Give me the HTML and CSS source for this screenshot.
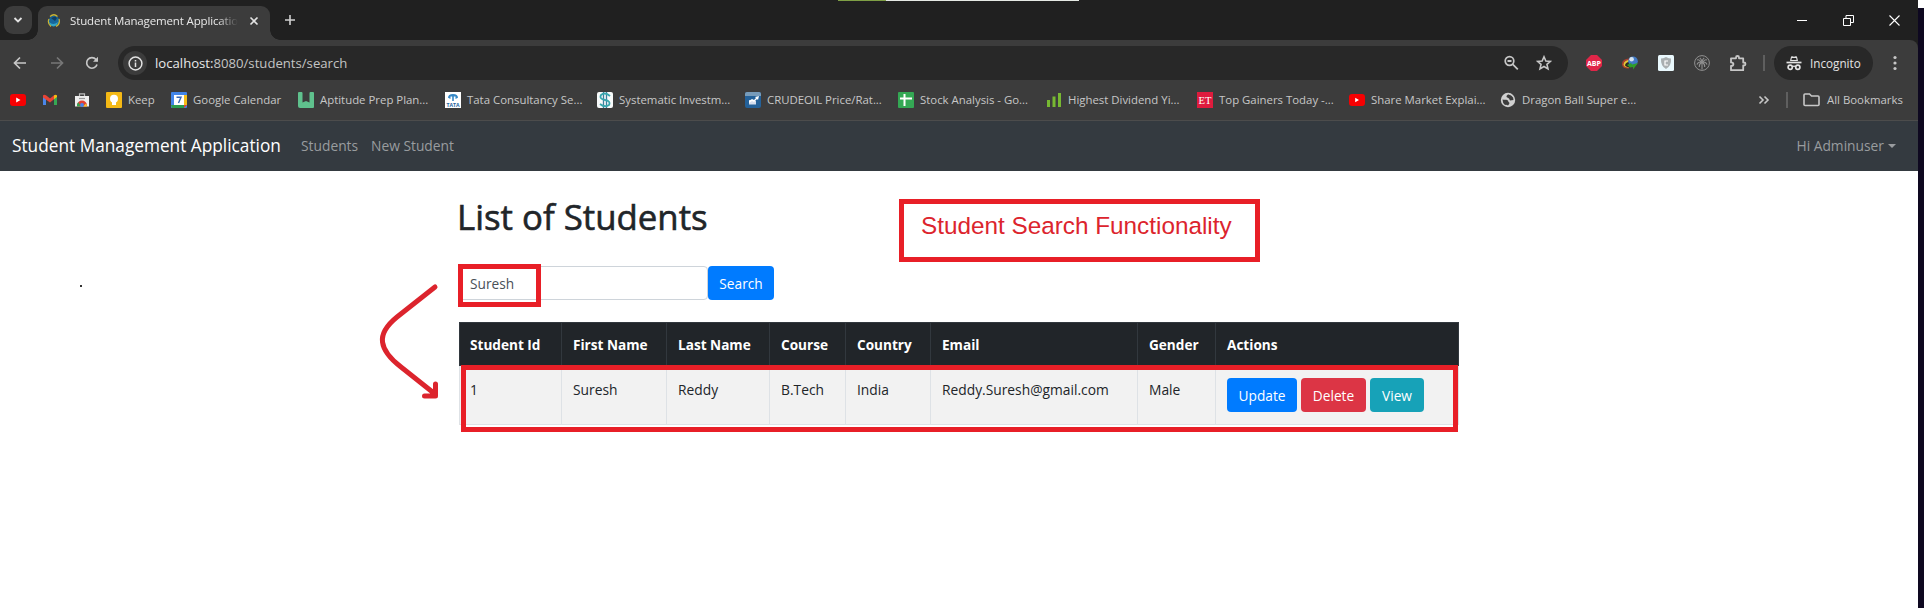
FILE: index.html
```html
<!DOCTYPE html>
<html lang="en">
<head>
<meta charset="utf-8">
<title>Student Management Application</title>
<link rel="stylesheet" href="styles.css">
</head>
<body>
<div class="window">
  <header class="tabstrip">
    <button class="tab-search"><svg width="10" height="8" viewBox="0 0 10 8"><path d="M1.5 2l3.5 3.5L8.500 2" fill="none" stroke="#e3e3e3" stroke-width="1.8"/></svg></button>
    <div class="tab">
      <svg width="14" height="14" viewBox="0 0 14 14"><circle cx="7" cy="7" r="5.300" fill="#16669b"/><path d="M2 8q4 4 9 0q-1 4-4.500 4.500Q3 12 2 8z" fill="#34a5c4"/><path d="M4 4l4 3 2-3-2-1.500z" fill="#133d5d"/><path d="M3 2.500Q7-1 10.500 2.500M12 5q1.500 5-3 7.500M2 5q-2 4 2 7.500" fill="none" stroke="#c9b536" stroke-width="1.200"/></svg>
      <span class="tab-title">Student Management Application</span>
      <svg class="tab-close" width="10" height="10" viewBox="0 0 10 10"><path d="M1.500 1.500l7 7m0-7l-7 7" stroke="#e3e3e3" stroke-width="1.600"/></svg>
    </div>
    <svg class="new-tab" width="12" height="12" viewBox="0 0 12 12"><path d="M6 1v10M1 6h10" stroke="#d0d0d0" stroke-width="1.600"/></svg>
    <div class="window-buttons">
      <svg width="11" height="11" viewBox="0 0 11 11"><path d="M0 5.500h10" stroke="#fff"/></svg>
      <svg width="11" height="11" viewBox="0 0 11 11"><path d="M.5 3.500h7v7h-7zM3 3V.5h7.500v7H8" fill="none" stroke="#fff"/></svg>
      <svg width="11" height="11" viewBox="0 0 11 11"><path d="M.5.5l10 10m0-10l-10 10" stroke="#fff" stroke-width="1.100"/></svg>
    </div>
    <div class="overlay-strip"></div>
  </header>

  <div class="toolbar">
    <svg class="back" width="14" height="14" viewBox="0 0 14 14"><path d="M13 7H2M7 1.500L1.500 7 7 12.500" fill="none" stroke="#c7c7c7" stroke-width="1.700"/></svg>
    <svg class="forward" width="14" height="14" viewBox="0 0 14 14"><path d="M1 7h11M7 1.500L12.500 7 7 12.500" fill="none" stroke="#777" stroke-width="1.700"/></svg>
    <svg class="reload" width="14" height="14" viewBox="0 0 14 14"><path d="M12 8.500A5.300 5.300 0 1 1 11 3.500l1.500 1.500" fill="none" stroke="#c7c7c7" stroke-width="1.700"/><path d="M13 .7v5H8z" fill="#c7c7c7"/></svg>
    <div class="omnibox">
      <span class="site-info"><svg width="15" height="15" viewBox="0 0 15 15"><circle cx="7.500" cy="7.500" r="6.400" fill="none" stroke="#e3e3e3" stroke-width="1.500"/><path d="M7.500 6.600v4.300M7.500 4v1.600" stroke="#e3e3e3" stroke-width="1.500"/></svg></span>
      <span class="url"><b>localhost:</b>8080/students/search</span>
      <svg class="magnify" width="16" height="16" viewBox="0 0 16 16"><circle cx="6.500" cy="6" r="4.300" fill="none" stroke="#c7c7c7" stroke-width="1.700"/><path d="M4.500 6h4M9.800 9.300l5 5" stroke="#c7c7c7" stroke-width="1.800"/></svg>
      <svg class="star" width="16" height="16" viewBox="0 0 16 16"><path d="M8 1.800l1.850 4.200 4.550.4-3.450 3.000 1.050 4.500L8 11.500l-4 2.400 1.050-4.500L1.600 6.400 6.150 6z" fill="none" stroke="#c7c7c7" stroke-width="1.600"/></svg>
    </div>
    <div class="extensions">
      <svg width="16" height="16" viewBox="0 0 16 16"><path d="M5 0h6l5 5v6l-5 5H5l-5-5V5z" fill="#df2648"/><text x="8" y="10.800" text-anchor="middle" class="abp" textLength="14" lengthAdjust="spacingAndGlyphs">ABP</text></svg>
      <svg width="16" height="16" viewBox="0 0 16 16"><path d="M0 10Q-.5 4 7 3.500l3 4Q6 8 7 13.500 1 14 0 10z" fill="#a8402c"/><path d="M1.500 9.500Q2 5 8 5l2 2Q5.500 8 6.500 12.500 2 12.500 1.500 9.500z" fill="#e3c938"/><path d="M3 10Q4 6.500 9 6.500L7 12Q3.500 12 3 10z" fill="#2a2a22"/><circle cx="11" cy="6.200" r="4.800" fill="#4179c4"/><circle cx="9.600" cy="4.200" r="2.300" fill="#d4e4f0"/><path d="M5 10l4-2 1 1.500 6-1.500-5 6.500v-2.500l-3 .5z" fill="#2f9d29"/></svg>
      <svg width="16" height="16" viewBox="0 0 16 16"><rect width="16" height="16" rx="1.500" fill="#e9f8fd"/><path d="M8 2q3 1.500 5 1.500Q13.500 11 8 14 2.500 11 3 3.500 5 3.500 8 2z" fill="#a9afb1"/><path d="M10 6H7v4h3" fill="none" stroke="#fff" stroke-width="1.200"/></svg>
      <svg width="16" height="16" viewBox="0 0 16 16"><circle cx="8" cy="8" r="7.400" fill="none" stroke="#909090"/><path d="M8 6.500v8M7 7Q5.500 4 3 5M9 7q1.500-3 4-2M7.500 7Q4 6.500 3 9.500M8.500 7Q12 6.500 13 9.500M7.500 7.500Q5 9 5.300 12M8.500 7.500q2.500 1.500 2.200 4.500M8 7Q7.500 4 5.800 3M8 7q.5-3 2.200-4" fill="none" stroke="#909090" stroke-width="1.100"/></svg>
      <svg width="18" height="18" viewBox="0 0 18 18"><path d="M2 4.300H7V3.500a1.500 1.500 0 0 1 3 0v.8h4.200v4.200h.8a1.500 1.500 0 0 1 0 3h-.8v4.700H2v-4.200q2.400-.2 2.400-1.800T2 8.400z" fill="none" stroke="#c7c7c7" stroke-width="1.800" stroke-linejoin="round"/></svg>
    </div>
    <span class="divider"></span>
    <div class="incognito"><svg width="16" height="16" viewBox="0 0 16 16"><path d="M4 6l1-4.200Q5.300 1 6.200 1.300L8 1.800l1.800-.5q.9-.3 1.200.5L12 6z" fill="#e3e3e3"/><path d="M5.800 2.900h4.400l.4 2H5.400z" fill="#292929"/><path d="M.5 7.500h15" stroke="#e3e3e3" stroke-width="1.700"/><circle cx="4.200" cy="12.200" r="2.100" fill="none" stroke="#e3e3e3" stroke-width="1.700"/><circle cx="11.800" cy="12.200" r="2.100" fill="none" stroke="#e3e3e3" stroke-width="1.700"/><path d="M6 11.800q2-1.200 4 0" fill="none" stroke="#e3e3e3" stroke-width="1.300"/></svg><span>Incognito</span></div>
    <svg class="kebab" width="4" height="16" viewBox="0 0 4 16"><g fill="#c7c7c7"><circle cx="2" cy="2.500" r="1.600"/><circle cx="2" cy="8" r="1.600"/><circle cx="2" cy="13.500" r="1.600"/></g></svg>
  </div>

  <nav class="bookmarks">
    <a><svg width="16" height="16" viewBox="0 0 16 16"><rect y="2" width="16" height="12" rx="3" fill="#f60002"/><path d="M6.200 5.500v5L10.500 8z" fill="#fff"/></svg></a>
    <a><svg width="16" height="16" viewBox="0 0 16 16"><path d="M1 4.500v8.500h3V6z" fill="#4a86e8"/><path d="M15 4.500v8.500h-3V6z" fill="#36a853"/><path d="M1 3.500q1-1.500 3-.2L8 6.500l4-3.200v4L8 10.500 1 5.500z" fill="#e84435"/><path d="M12 3.300q2-1.300 3 .2V5l-3 2.300z" fill="#f6bb11"/></svg></a>
    <a><svg width="16" height="16" viewBox="0 0 16 16"><path d="M5.500 4V1.800h5V4" fill="none" stroke="#bbb" stroke-width="1.200"/><path d="M1 4h14v10.500H1z" fill="#eee"/><path d="M3 14.500v-1a5 5 0 0 1 10 0v1z" fill="#e34133"/><path d="M3 14.500a5 5 0 0 1 1.200-4.200L7 14.500z" fill="#31a352"/><path d="M13 14.500a5 5 0 0 0-1-3L9 14.500z" fill="#f7c32b"/><circle cx="8" cy="13" r="1.900" fill="#4485ed"/><path d="M5 6.500h6" stroke="#999" stroke-width="1.200"/></svg></a>
    <a><svg width="16" height="16" viewBox="0 0 16 16"><rect width="16" height="16" rx="1" fill="#f4b915"/><circle cx="8" cy="6.800" r="4" fill="#fff"/><path d="M6 10h4v3H6z" fill="#fff"/></svg><span>Keep</span></a>
    <a><svg width="16" height="16" viewBox="0 0 16 16"><rect width="16" height="16" rx="1" fill="#4285e8"/><path d="M13 3h3v10h-3z" fill="#f6bd19"/><path d="M0 13h13v3H1z" fill="#2a9d4f"/><path d="M13 13h3l-3 3z" fill="#e34134"/><path d="M3 3h10v10H3z" fill="#fff"/><path d="M5.500 5.200h4.500L7.500 11" fill="none" stroke="#3466b5" stroke-width="1.400"/></svg><span>Google Calendar</span></a>
    <a><svg width="16" height="16" viewBox="0 0 16 16"><path d="M0 1q0-1 1-1h2.500q1 0 1 1v9.500l3.500-1.500 3.500 1.500V1q0-1 1-1H15q1 0 1 1v14q0 1-1 1H2q-2 0-2-2z" fill="#5fc18d"/></svg><span>Aptitude Prep Plan...</span></a>
    <a><svg width="16" height="16" viewBox="0 0 16 16"><path d="M0 0h16v16H0z" fill="#fff"/><path d="M3 5.800Q3 2 8 2t5 3.800L10.500 7V4.500h-1.700V9H7.200V4.500H5.500V7z" fill="#3587c5"/><text x="8" y="14.600" text-anchor="middle" class="tata" textLength="13" lengthAdjust="spacingAndGlyphs">TATA</text></svg><span>Tata Consultancy Se...</span></a>
    <a><svg width="16" height="16" viewBox="0 0 16 16"><rect width="16" height="16" rx="2" fill="#f7fafa"/><path d="M6.500 0v16M9.500 0v16" stroke="#3e7e9d" stroke-width="1.300"/><path d="M13 4Q8-.5 4 3q-2 4 4 5t4 5q-4 3-9-1" fill="none" stroke="#38a6ad" stroke-width="1.800"/></svg><span>Systematic Investm...</span></a>
    <a><svg width="16" height="16" viewBox="0 0 16 16"><rect width="16" height="16" rx="2" fill="#246199"/><path d="M0 2q0-2 2-2h12q2 0 2 2v2H0z" fill="#779bb9"/><path d="M4 8v4.500h7V9" fill="#d5dfef"/><path d="M4 9l3-2 2 1 2-2-1-1 4-1-1 4-1-1-3 3-2-1-3 2z" fill="#fff"/></svg><span>CRUDEOIL Price/Rat...</span></a>
    <a><svg width="16" height="16" viewBox="0 0 16 16"><rect width="16" height="16" rx="1" fill="#34a854"/><path d="M6.500 2v12M2 6.500h12" stroke="#fff" stroke-width="2"/></svg><span>Stock Analysis - Go...</span></a>
    <a><svg width="16" height="16" viewBox="0 0 16 16"><path d="M1 8h3v7H1zM6.500 4.500h3V15h-3zM12 1h3v14h-3z" fill="#77b832"/></svg><span>Highest Dividend Yi...</span></a>
    <a><svg width="16" height="16" viewBox="0 0 16 16"><path d="M0 0h16v16H0z" fill="#df1b3d"/><text x="8" y="12" text-anchor="middle" class="et" textLength="13" lengthAdjust="spacingAndGlyphs">ET</text></svg><span>Top Gainers Today -...</span></a>
    <a><svg width="16" height="16" viewBox="0 0 16 16"><rect y="2" width="16" height="12" rx="3" fill="#f60002"/><path d="M6.200 5.800v4.400L10 8z" fill="#fff"/></svg><span>Share Market Explai...</span></a>
    <a><svg width="16" height="16" viewBox="0 0 16 16"><circle cx="8" cy="8" r="7.200" fill="#d0d0d0"/><path d="M8 2.500q-1 2 1.500 2.500l1.500 1.500q2 .5 2.500-.5M2.500 7.500q2 .5 4 .2 2 .3 2 2.300 2 1-.5 3.500-1.500-1-3-.5Q2.500 11 2.500 7.500z" fill="#3c3c3c"/><path d="M8 2.500q-2 1-1.500 2.500L9 6.500l1 2 3.500-.5Q13 4 10 3z" fill="#3c3c3c"/></svg><span>Dragon Ball Super e...</span></a>
    <svg class="more" width="12" height="10" viewBox="0 0 12 10"><path d="M1.500 1.500L5 5 1.500 8.500M6.500 1.500L10 5 6.500 8.500" fill="none" stroke="#c7c7c7" stroke-width="1.600"/></svg>
    <i class="divider"></i>
    <a class="all"><svg width="17" height="14" viewBox="0 0 17 14"><path d="M1 2q0-1 1-1h4.500l2 2H15q1 0 1 1v7.500q0 1-1 1H2q-1 0-1-1z" fill="none" stroke="#c7c7c7" stroke-width="1.600"/></svg><span>All Bookmarks</span></a>
  </nav>

  <div class="navbar">
    <a class="brand">Student Management Application</a>
    <a class="nav-students">Students</a>
    <a class="nav-new">New Student</a>
    <a class="user">Hi Adminuser</a>
  </div>

  <main class="page">
    <div class="container">
      <h1>List of Students</h1>
      <form class="search"><input value="Suresh"><button type="button" class="btn primary">Search</button></form>
      <table>
        <colgroup><col class="c1"><col class="c2"><col class="c3"><col class="c4"><col class="c5"><col class="c6"><col class="c7"><col class="c8"></colgroup>
        <thead><tr><th>Student Id</th><th>First Name</th><th>Last Name</th><th>Course</th><th>Country</th><th>Email</th><th>Gender</th><th>Actions</th></tr></thead>
        <tbody><tr><td>1</td><td>Suresh</td><td>Reddy</td><td>B.Tech</td><td>India</td><td>Reddy.Suresh@gmail.com</td><td>Male</td><td><div class="actions"><a class="btn primary update">Update</a><a class="btn danger">Delete</a><a class="btn info">View</a></div></td></tr></tbody>
      </table>
    </div>
    <div class="note"><span>Student Search Functionality</span></div>
    <div class="mark mark-input"></div>
    <div class="mark mark-row"></div>
    <svg class="arrow" width="70" height="120" viewBox="0 0 70 120"><path d="M60 7L22 37Q6 50 7.500 62T26 87L60 114M60.500 104v12H49.500" fill="none" stroke="#dc242d" stroke-width="5" stroke-linecap="round" stroke-linejoin="round"/></svg>
    <span class="dot"></span>
  </main>
</div>
<aside class="desktop"></aside>
</body>
</html>
```
FILE: styles.css
```css
* { box-sizing: border-box; }
body { margin: 0; width: 1924px; height: 608px; overflow: hidden; display: flex; background: #fff; font-family: "Open Sans", "Noto Sans", sans-serif; }
svg { display: block; flex: none; }
a, span { white-space: nowrap; }
.window { width: 1918px; height: 608px; display: flex; flex-direction: column; background: #1f1f1f; }
.desktop { width: 6px; height: 600px; margin-top: 8px; background: #0e0820; }

.tabstrip { position: relative; height: 40px; background: #202020; display: flex; align-items: center; padding-left: 4px; }
.tab-search { width: 28px; height: 28px; border: 0; border-radius: 9px; background: #3c3c3c; padding: 0; display: flex; align-items: center; justify-content: center; }
.tab { position: relative; align-self: flex-end; width: 232px; height: 34px; margin-left: 6px; background: #3c3c3c; border-radius: 9px 9px 0 0; display: flex; align-items: center; padding: 0 11px 5px 9px; }
.tab::before, .tab::after { content: ""; position: absolute; bottom: 0; width: 10px; height: 10px; }
.tab::before { left: -10px; background: radial-gradient(circle at 0 0, transparent 9.500px, #3c3c3c 10px); }
.tab::after { right: -10px; background: radial-gradient(circle at 100% 0, transparent 9.500px, #3c3c3c 10px); }
.tab-title { width: 170px; margin-left: 9px; overflow: hidden; font-size: 11.500px; letter-spacing: -.14px; color: #e8e8e8; -webkit-mask-image: linear-gradient(90deg, #000 148px, transparent 168px); }
.tab-close { margin-left: 9px; }
.new-tab { margin-left: 14px; }
.window-buttons { display: flex; gap: 35px; margin-left: auto; margin-right: 18px; }
.overlay-strip { position: absolute; left: 838px; top: 0; width: 241px; height: 1px; background: linear-gradient(90deg, #7f9f45 48px, #e5e9e4 48px); }

.toolbar { height: 46px; background: #3c3c3c; border-top-right-radius: 8px; display: flex; align-items: center; padding-left: 13px; }
.forward { margin-left: 23px; }
.reload { margin-left: 21px; }
.omnibox { width: 1450px; height: 34px; margin-left: 19px; border-radius: 17px; background: #282828; display: flex; align-items: center; padding: 0 16px 0 5px; }
.site-info { width: 24px; height: 24px; border-radius: 50%; background: #3c3c3c; display: flex; align-items: center; justify-content: center; }
.url { margin-left: 8px; font-size: 13.150px; color: #c4c4c4; }
.url b { color: #e8e8e8; font-weight: 400; }
.magnify { margin-left: auto; }
.star { margin-left: 17px; }
.extensions { display: flex; align-items: center; gap: 20px; margin-left: 18px; }
.extensions svg:last-child { margin-left: -1px; }
.abp { font: 700 7.500px "Open Sans", sans-serif; fill: #fff; }
.tata { font: 700 5px "Open Sans", sans-serif; fill: #2464a0; }
.et { font: 11px "Liberation Serif", serif; fill: #fff; }
.divider { width: 2px; height: 16px; background: #5f5f5f; }
.toolbar .divider { margin-left: 16px; }
.incognito { width: 99px; height: 34px; margin-left: 9px; border-radius: 17px; background: #282828; color: #e3e3e3; display: flex; align-items: center; gap: 8px; padding-left: 12px; font-size: 11.700px; }
.kebab { margin-left: 20px; }

.bookmarks { height: 35px; background: #3c3c3c; border-bottom: 1px solid #4c4c4c; padding: 0 0 7px 10px; display: grid; align-items: center; grid-template-columns: 32px 32px 32px 65px 127px 147px 152px 148px 153px 148px 151px 152px 151px 258px 28px 17px 1fr; font-size: 11.400px; color: #c7c7c7; }
.bookmarks a { display: flex; align-items: center; gap: 6px; }
.bookmarks .all { gap: 7px; }

.navbar { height: 50px; background: #343a40; display: flex; align-items: center; padding: 0 22px 1px 12px; font-size: 13.800px; color: #999c9f; }
.brand { width: 289px; font-size: 17.250px; color: #fff; }
.nav-students { width: 70px; }
.user { margin-left: auto; display: flex; align-items: center; }
.user::after { content: ""; margin-left: 4px; border: 4px solid transparent; border-top-color: #999c9f; border-bottom: 0; }

.page { position: relative; flex: 1; background: #fff; color: #212529; }
.container { width: 1000px; margin-left: 458px; padding-top: 22px; }
h1 { margin: 0; font-size: 34.800px; line-height: 48px; font-weight: 500; -webkit-text-stroke: .6px #212529; margin-left: -1px; }
.search { display: flex; margin: 25px 0 22px; }
.search input { width: 250px; height: 34px; border: 1px solid #ced4da; border-radius: 4px; padding: 0 11px; font: 13.700px "Open Sans", sans-serif; color: #495057; }
.btn { height: 34px; border: 0; border-radius: 4px; color: #fff; font: 13.700px "Open Sans", sans-serif; padding: 0 12px; display: flex; align-items: center; justify-content: center; }
.primary { background: #007bff; }
.danger { background: #dc3545; width: 65px; }
.info { background: #17a2b8; width: 54px; }
.search .btn { width: 66px; }
.update { width: 70px; }
table { width: 999px; margin-left: 1px; table-layout: fixed; border-collapse: collapse; font-size: 13.800px; }
.c1 { width: 102px; } .c2 { width: 105px; } .c3 { width: 103px; } .c4 { width: 76px; } .c5 { width: 85px; } .c6 { width: 207px; } .c7 { width: 78px; } .c8 { width: 243px; }
th { height: 43px; padding: 1px 11px 0; text-align: left; background: #212529; border: 1px solid #32383e; color: #fff; font-size: 13.600px; font-weight: 700; white-space: nowrap; }
th:first-child, td:first-child { padding-left: 10px; }
td { height: 59px; padding: 12px 11px; line-height: 24px; vertical-align: top; background: #f2f2f2; border: 1px solid #dee2e6; }
.actions { display: flex; gap: 4px; }
.mark, .note { position: absolute; border: 5px solid #e81f27; }
.note { left: 899px; top: 28px; width: 361px; height: 63px; padding: 7px 0 0 17px; color: #dc242d; font: 24.300px/30px "Liberation Sans", Arial, sans-serif; }
.mark-input { left: 458px; top: 93px; width: 83px; height: 43px; }
.mark-row { left: 461px; top: 194px; width: 997px; height: 67px; }
.arrow { position: absolute; left: 375px; top: 109px; }
.dot { position: absolute; left: 80px; top: 114px; width: 2px; height: 2px; background: #333; }
```
